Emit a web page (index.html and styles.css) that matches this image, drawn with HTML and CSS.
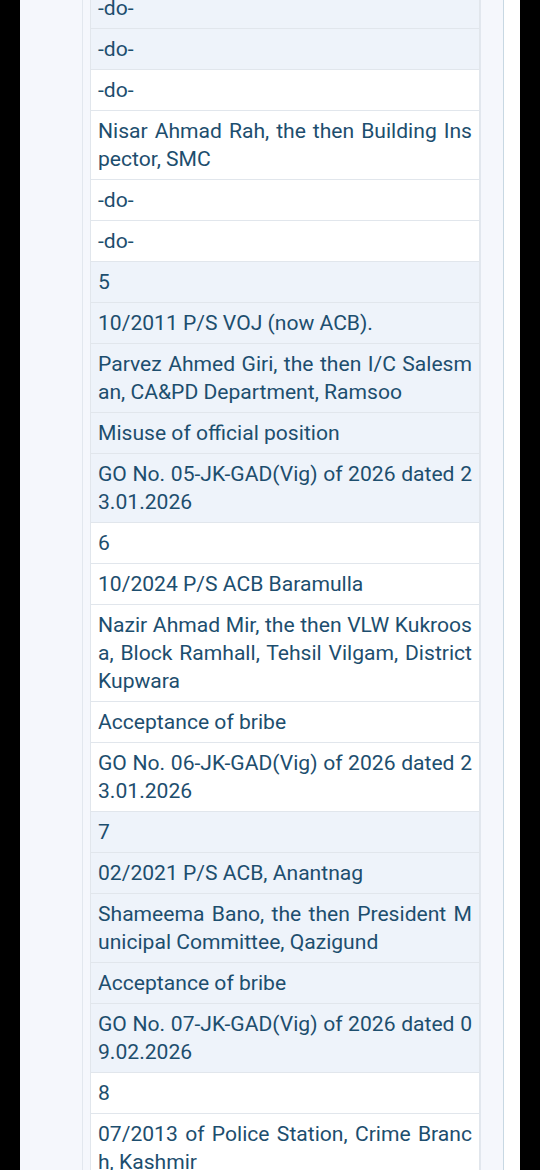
FILE: index.html
```html
<!DOCTYPE html>
<html lang="en">
<head>
    <meta charset="UTF-8">
    <meta name="viewport" content="width=device-width, initial-scale=1.0">
    <title>Vigilance Orders</title>
    <link rel="stylesheet" href="styles.css">
</head>
<body>
    <div class="screen">
        <div class="panel">
            <div class="table-wrap">
                <table class="orders">
                    <tbody class="shade">
                        <tr><td>-do-</td></tr>
                        <tr><td>-do-</td></tr>
                    </tbody>
                    <tbody>
                        <tr><td>-do-</td></tr>
                        <tr><td>Nisar Ahmad Rah, the then Building Inspector, SMC</td></tr>
                        <tr><td>-do-</td></tr>
                        <tr><td>-do-</td></tr>
                    </tbody>
                    <tbody class="shade">
                        <tr><td>5</td></tr>
                        <tr><td>10/2011 P/S VOJ (now ACB).</td></tr>
                        <tr><td>Parvez Ahmed Giri, the then I/C Salesman, CA&amp;PD Department, Ramsoo</td></tr>
                        <tr><td>Misuse of official position</td></tr>
                        <tr><td>GO No. 05-JK-GAD(Vig) of 2026 dated 23.01.2026</td></tr>
                    </tbody>
                    <tbody>
                        <tr><td>6</td></tr>
                        <tr><td>10/2024 P/S ACB Baramulla</td></tr>
                        <tr><td>Nazir Ahmad Mir, the then VLW Kukroosa, Block Ramhall, Tehsil Vilgam, District Kupwara</td></tr>
                        <tr><td>Acceptance of bribe</td></tr>
                        <tr><td>GO No. 06-JK-GAD(Vig) of 2026 dated 23.01.2026</td></tr>
                    </tbody>
                    <tbody class="shade">
                        <tr><td>7</td></tr>
                        <tr><td>02/2021 P/S ACB, Anantnag</td></tr>
                        <tr><td>Shameema Bano, the then President Municipal Committee, Qazigund</td></tr>
                        <tr><td>Acceptance of bribe</td></tr>
                        <tr><td>GO No. 07-JK-GAD(Vig) of 2026 dated 09.02.2026</td></tr>
                    </tbody>
                    <tbody>
                        <tr><td>8</td></tr>
                        <tr><td>07/2013 of Police Station, Crime Branch, Kashmir</td></tr>
                    </tbody>
                </table>
            </div>
        </div>
    </div>
</body>
</html>
```

FILE: styles.css
```css
body {
    margin: 0;
    background-color: #000;
    font-family: Roboto, "Noto Sans", sans-serif;
    overflow: hidden;
}
.screen {
    margin: 0 20px;
    height: 1170px;
    background-color: #fff;
    overflow: hidden;
}
.panel {
    display: flow-root;
    width: 484px;
    height: 100%;
    box-sizing: border-box;
    padding-left: 62px;
    padding-right: 22px;
    background-color: #f5f7fc;
    border-right: 1px solid #c8d8e3;
}
.table-wrap {
    margin-top: -13px;
    height: 1300px;
    padding-left: 7px;
    border-left: 1px solid #e2e7ee;
    border-right: 1px solid #e2e7ee;
}
.orders {
    width: 390px;
    border-collapse: collapse;
    table-layout: fixed;
}
.orders td {
    padding: 6px 7px;
    border: 1px solid #e1e6ec;
    font-size: 21.1px;
    line-height: 28px;
    color: #1d4e6e;
    text-align: justify;
    word-break: break-all;
    background-color: #fff;
}
.orders .shade td {
    background-color: #eef3fa;
}
```
